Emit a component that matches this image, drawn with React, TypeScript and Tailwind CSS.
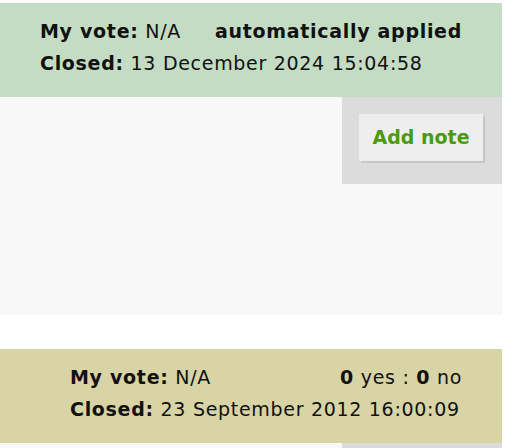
import React from 'react';

interface IPoll {
    tone: string;
    indent: string;
    right: React.ReactNode;
    closed: string;
}

const PollBar: React.FC<IPoll> = ({ tone, indent, right, closed }) => (
    <div className={`w-[502px] h-[94px] pt-[12px] pr-[40px] ${indent} ${tone}`}>
        <div className="flex justify-between leading-[32px]">
            <span><b>My vote:</b> N/A</span>
            <span>{right}</span>
        </div>
        <div className="leading-[32px]"><b>Closed:</b> {closed}</div>
    </div>
);

export default function App() {
    return (
        <div className="bg-white pt-[3px] text-[19px] tracking-[0.7px] text-[#111]" style={{ fontFamily: '"DejaVu Sans", Verdana, sans-serif' }}>
            <PollBar
                tone="bg-[#c3dcc3]"
                indent="pl-[40px]"
                right={<b>automatically applied</b>}
                closed="13 December 2024 15:04:58"
            />
            <div className="w-[502px] h-[218px] bg-[#f8f8f8] flex justify-end items-start">
                <div className="w-[160px] h-[87px] bg-[#dcdcdc] p-[17px]">
                    <button className="w-[124px] h-[47px] bg-[#eeeeee] shadow-[2px_2px_0_#c6c6c6] text-[19px] tracking-normal font-bold text-[#4b9a12]">
                        Add note
                    </button>
                </div>
            </div>
            <div className="h-[34px]" />
            <PollBar
                tone="bg-[#d8d4a6]"
                indent="pl-[70px]"
                right={<><b>0</b> yes : <b>0</b> no</>}
                closed="23 September 2012 16:00:09"
            />
            <div className="w-[502px] h-[5px] bg-[#f8f8f8] flex justify-end">
                <div className="w-[160px] bg-[#dcdcdc]" />
            </div>
        </div>
    );
}
